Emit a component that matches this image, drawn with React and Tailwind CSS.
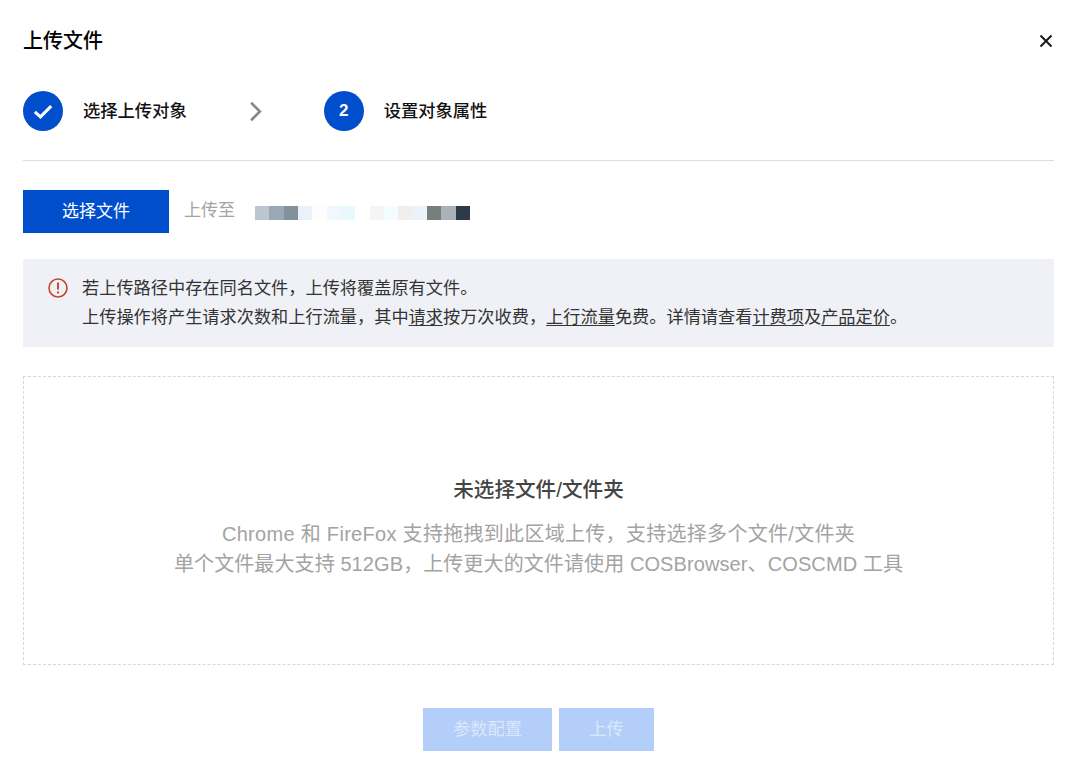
import React from "react";

const blocks = ["#bcc6d1","#9aa8b5","#84919b","#eaf1f8","#fbfdff","#f0f8fe","#e8f9fe","#ffffff","#f7f5f3","#f3fdfe","#f2eeeb","#eaf3fb","#777f7c","#a8b2b7","#2c3b47"];

export default function App() {
  return (
    <div className="w-[1080px] h-[772px] bg-white overflow-hidden pl-[23px] pr-[26px] text-[#1a1a1a] font-['Liberation_Sans','Noto_Sans_CJK_SC',sans-serif]">
      <header className="h-[81px] pt-[27px] flex items-start justify-between">
        <h1 className="text-[20px] leading-[28px] font-medium text-black">上传文件</h1>
        <button className="mt-[6px] w-[16px] h-[16px] text-[#1a1a1a]" aria-label="关闭">
          <svg viewBox="0 0 16 16" className="w-[16px] h-[16px]" fill="none" stroke="currentColor" strokeWidth="2">
            <path d="M2.5 2.5 13.5 13.5M13.5 2.5 2.5 13.5" />
          </svg>
        </button>
      </header>

      <div className="h-[80px] border-b border-[#dcdde0] flex items-start pt-[10px]">
        <div className="w-[40px] h-[40px] rounded-full bg-[#004ecb] flex items-center justify-center">
          <svg viewBox="0 0 22 18" className="w-[20px] h-[17px]" fill="none" stroke="#fff" strokeWidth="3.4">
            <path d="M2 9.5 8.2 15 20 3" />
          </svg>
        </div>
        <span className="ml-[20px] text-[17.3px] leading-[41px] font-medium text-[#111]">选择上传对象</span>
        <svg viewBox="0 0 14 24" className="ml-[62px] mt-[10px] w-[13px] h-[21px]" fill="none" stroke="#888" strokeWidth="3">
          <path d="M2 2 12 12 2 22" />
        </svg>
        <div className="ml-[62px] w-[40px] h-[40px] rounded-full bg-[#004ecb] flex items-center justify-center text-white text-[17px] font-bold">2</div>
        <span className="ml-[20px] text-[17.3px] leading-[41px] font-medium text-[#111]">设置对象属性</span>
      </div>

      <div className="mt-[29px] flex items-center h-[43px]">
        <button className="w-[146px] h-[43px] bg-[#004ecb] text-white text-[17px]">选择文件</button>
        <span className="ml-[15px] text-[17px] text-[#a3a3a3] -mt-[2px]">上传至</span>
        <div className="ml-[20px] flex h-[14px] w-[215px] mt-[3px]">
          {blocks.map((c, i) => (
            <div key={i} className="flex-1" style={{ backgroundColor: c }} />
          ))}
        </div>
      </div>

      <div className="mt-[26px] h-[88px] bg-[#f0f1f6] flex pl-[25px] pt-[15px] text-[17.2px] leading-[29px] text-[#333]">
        <svg viewBox="0 0 20 20" className="w-[20px] h-[20px] mt-[4px] shrink-0" fill="none" stroke="#c9452a" strokeWidth="1.6">
          <circle cx="10" cy="10" r="9" />
          <path d="M10 4.6v7" strokeWidth="1.9" />
          <path d="M10 13.4v2" strokeWidth="1.9" />
        </svg>
        <div className="ml-[14px]">
          <p>若上传路径中存在同名文件，上传将覆盖原有文件。</p>
          <p>
            上传操作将产生请求次数和上行流量，其中<a className="underline underline-offset-2">请求</a>按万次收费，<a className="underline underline-offset-2">上行流量</a>免费。详情请查看<a className="underline underline-offset-2">计费项</a>及<a className="underline underline-offset-2">产品定价</a>。
          </p>
        </div>
      </div>

      <div className="mt-[29px] h-[289px] border border-dashed border-[#d5d7de] flex flex-col items-center pt-[98px]">
        <h2 className="text-[20.6px] leading-[30px] font-medium text-[#444]">未选择文件/文件夹</h2>
        <p className="mt-[14px] text-[20px] leading-[30px] text-[#a3a3a3] text-center">
          <span className="tracking-[0.3px]">Chrome 和 FireFox 支持拖拽到此区域上传，支持选择多个文件/文件夹</span>
          <br />
          <span className="tracking-[0.1px]">单个文件最大支持 512GB，上传更大的文件请使用 COSBrowser、COSCMD 工具</span>
        </p>
      </div>

      <div className="mt-[43px] flex justify-center gap-[7px]">
        <button className="w-[129px] h-[43px] bg-[#b3cef8] text-[#dce8fb] text-[17.2px]">参数配置</button>
        <button className="w-[95px] h-[43px] bg-[#b3cef8] text-[#dce8fb] text-[17.2px]">上传</button>
      </div>
    </div>
  );
}
